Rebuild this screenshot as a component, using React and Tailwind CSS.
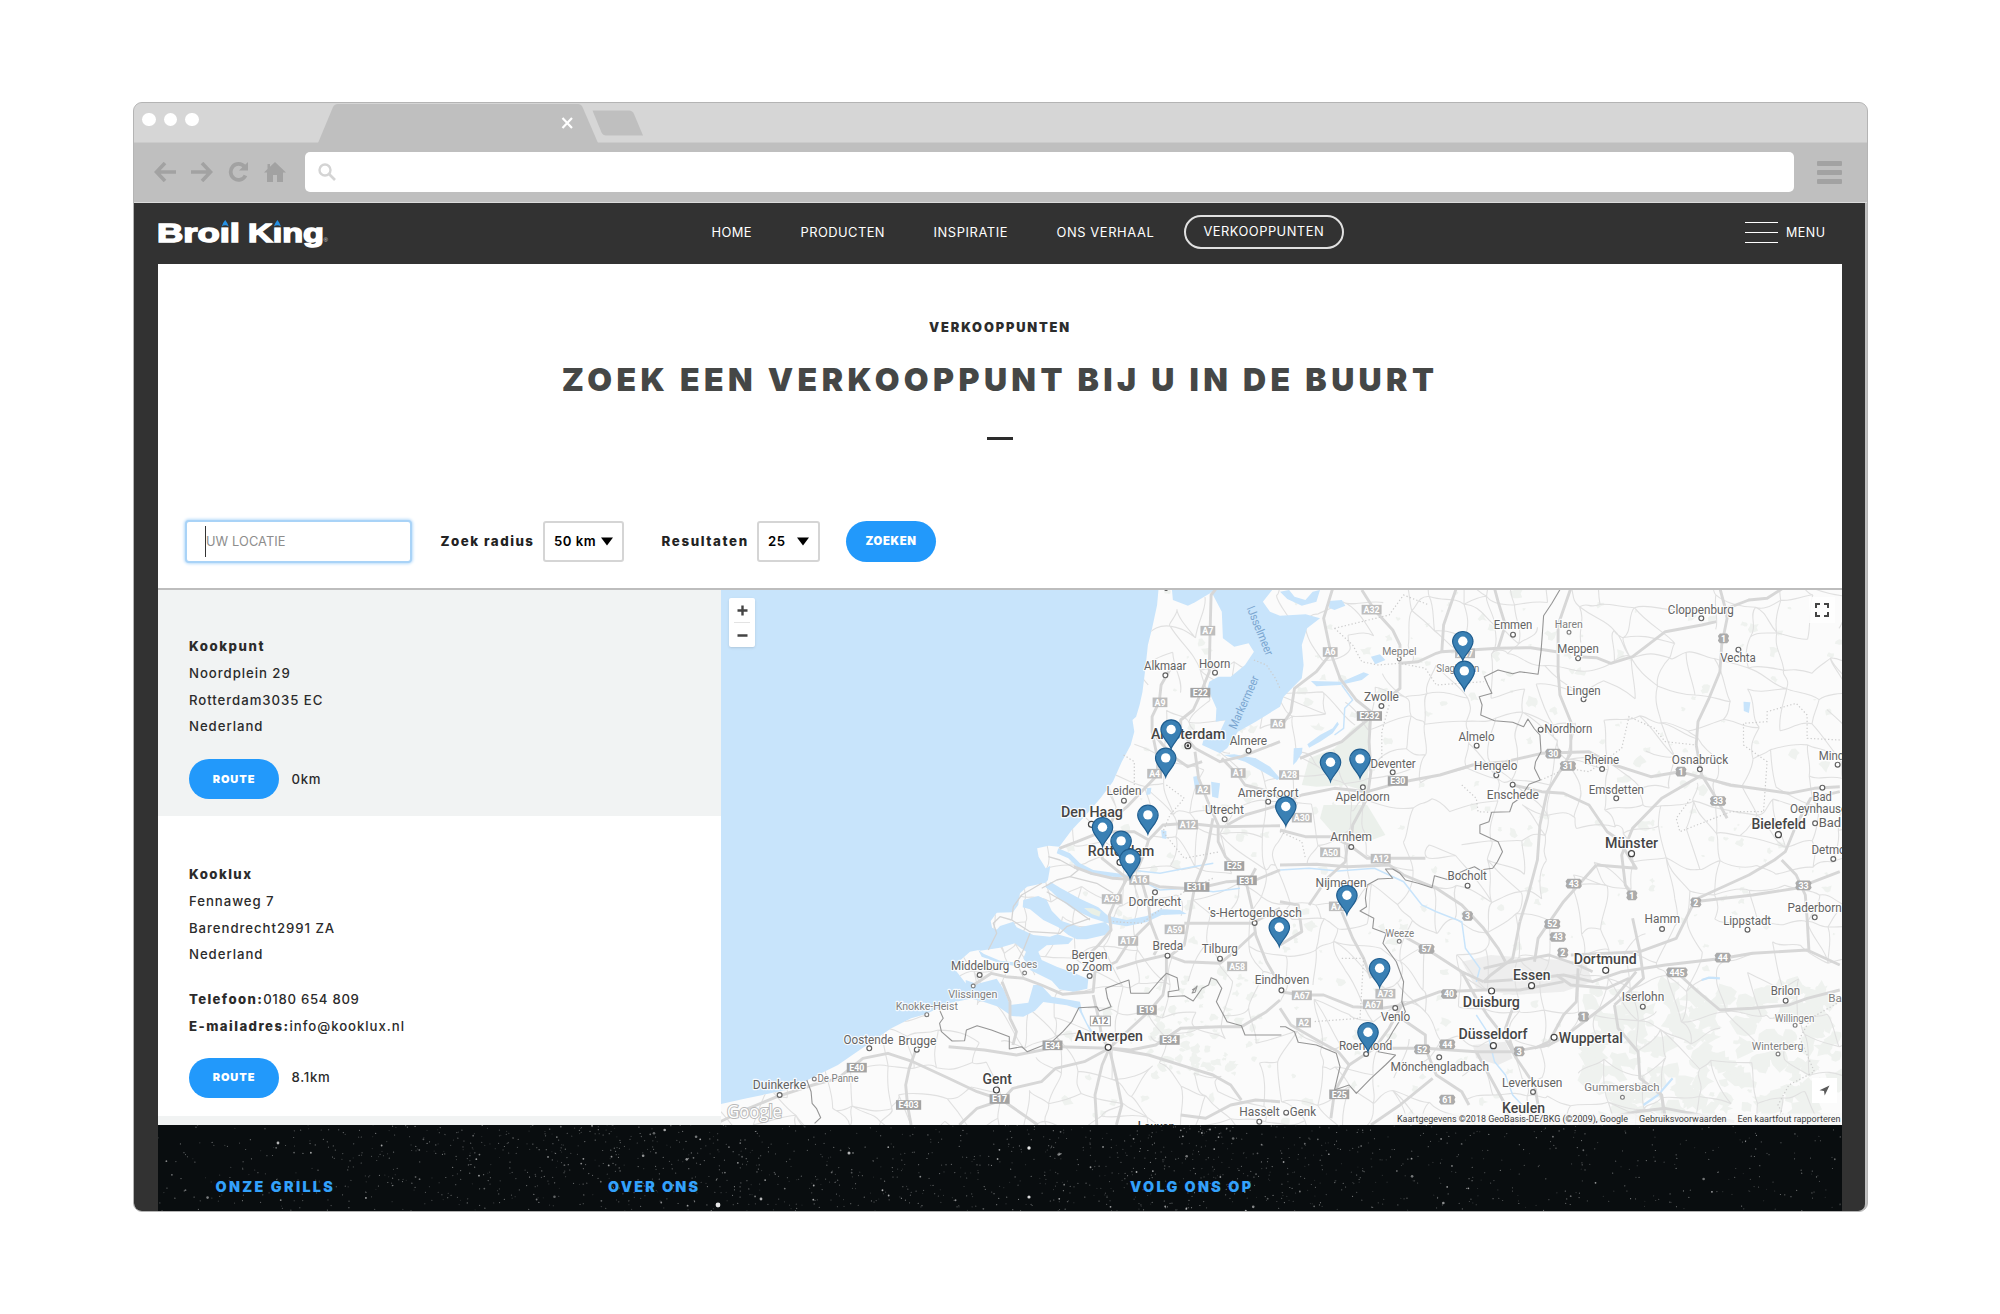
import React from "react";

/* ---------- helpers ---------- */
function rng(seed) {
  let s = seed;
  return () => {
    s = (s * 1664525 + 1013904223) % 4294967296;
    return s / 4294967296;
  };
}

/* Map sheets (west, east, Zeeland inset), each with its own grid unit. */
const SHEETS = {
  W: { x: 720, y: 585, kx: 1 / 2.8, ky: 1 / 3 },
  E: { x: 1280, y: 585, kx: 1 / 2.7509, ky: 1 / 3 },
  Z: { x: 980, y: 820, kx: 1 / 3, ky: 1 / 3 },
};
const px = (s, x) => SHEETS[s].x + x * SHEETS[s].kx;
const py = (s, y) => SHEETS[s].y + y * SHEETS[s].ky;
const line = (s, str) =>
  str
    .split(" ")
    .map((p) => {
      const [x, y] = p.split(",").map(Number);
      return px(s, x).toFixed(1) + "," + py(s, y).toFixed(1);
    })
    .join(" ");

const LAND =
  "1228,10 1224,60 1210,130 1198,180 1190,260 1183,320 1175,360 1165,395 1155,405 1160,440 1150,480 1125,530 1100,590 1065,640 1020,695 985,735 950,785 920,782 888,790 892,815 912,850 925,842 918,885 912,893 860,905 840,925 835,960 820,982 775,983 758,1008 762,1028 778,1035 765,1090 735,1093 700,1100 652,1145 688,1195 725,1205 715,1238 640,1255 575,1288 535,1300 480,1330 400,1388 330,1440 245,1485 185,1515 75,1540 0,1558 0,1640 3200,1640 3200,0";

const WATER = {
  W: [
    "1265,10 1268,45 1310,62 1330,52 1372,25 1390,10",
    "1378,25 1405,80 1408,160 1440,185 1480,175 1495,200 1470,240 1430,275 1395,275 1370,290 1365,310 1390,370 1388,410 1415,405 1400,440 1360,440 1350,480 1400,505 1420,490 1450,440 1500,410 1568,365 1578,335 1629,280 1634,240 1629,180 1644,130 1680,100 1640,88 1568,92 1540,80 1520,50 1550,10 1385,10",
    "1410,510 1440,508 1500,520 1540,545 1568,580 1560,585 1520,560 1470,530",
    "1325,575 1340,572 1342,610 1330,612",
    "1375,590 1400,595 1395,640 1378,635",
    "1195,610 1208,608 1205,628 1194,630",
    "1235,735 1250,738 1250,762 1238,760",
  ],
  Z: [
    "235,85 270,100 300,130 340,150 400,158 450,165 450,172 390,170 335,165 295,145 265,115 230,100",
    "195,200 212,186 240,203 300,236 355,262 385,288 440,300 500,288 540,268 600,270 620,282 545,285 500,306 440,319 385,310 335,294 280,268 235,235 215,215",
    "130,240 175,228 200,240 215,272 245,303 300,322 375,306 394,325 375,345 320,358 290,358 265,345 235,322 190,300 150,268 128,262",
    "-5,385 25,380 45,335 60,318 100,305 110,322 160,345 210,350 232,343 280,356 265,372 200,376 175,395 185,420 230,440 290,462 325,478 322,506 280,515 238,508 215,482 150,450 130,415 138,395 105,370 60,383 0,392",
    "-5,390 12,402 60,422 130,430 145,442 130,442 60,430 5,410",
    "-43,480 -10,492 50,476 72,510 90,555 145,548 160,495 182,494 215,530 300,545 306,575 322,610 342,640 334,642 295,566 260,556 190,546 165,572 130,590 95,588 55,560 10,545 -43,532",
  ],
  E: [
    "0,20 25,15 40,35 70,45 90,20 110,15 100,50 60,62 20,42",
    "135,48 170,45 180,62 150,75 135,68",
    "85,288 170,290 230,262 245,268 225,285 165,300 100,304",
    "75,478 110,450 145,430 158,410 162,418 145,445 110,470 80,488",
    "38,490 62,488 60,505 45,530 36,540",
    "250,215 275,208 290,225 262,238",
    "1275,350 1294,352 1290,384 1276,378",
  ],
};

const MAJOR = {
  W: [
    "1390,10 1375,30 1372,150 1370,260 1340,340 1325,375 1290,405 1290,440 1330,490 1400,530 1460,515 1568,470",
    "1262,250 1235,300 1230,350 1210,395 1210,440 1240,480 1275,520 1310,545 1350,530",
    "1210,440 1225,520 1225,570 1180,620 1140,665 1100,700 1075,760 1070,820 1140,880",
    "1330,500 1340,580 1370,660 1395,720 1395,770 1415,815 1440,840",
    "1405,520 1450,570 1470,600 1540,620 1568,640",
    "950,790 1000,770 1070,740 1160,740 1200,765 1240,720 1310,715 1400,725 1568,722",
    "1420,720 1470,690 1568,660",
    "1200,765 1190,800 1170,850 1140,880 1110,940 1090,990 1095,1035 1060,1080 1040,1100",
    "990,845 1040,865 1100,880 1180,885 1230,905 1330,912 1420,890 1500,885 1568,855",
    "1380,700 1360,820 1330,900 1320,960 1300,1080 1250,1120 1250,1170",
    "1180,885 1200,960 1205,1010 1230,1080 1215,1110",
    "1205,1010 1140,1080 1110,1130 1050,1160 1045,1220 960,1228 900,1200 850,1180 800,1175 760,1165 710,1200",
    "1500,850 1475,900 1490,970 1500,1050 1530,1130 1568,1200",
    "1300,1015 1400,1015 1490,1015 1568,970",
    "1110,1150 1170,1130 1250,1110 1300,1130 1400,1135 1440,1100 1500,1040",
    "1250,1170 1240,1230 1200,1280 1150,1330 1090,1390",
    "1045,1230 1060,1300 1070,1360 1090,1390 1070,1440 1050,1530 1055,1620",
    "1090,1390 1110,1480 1125,1560 1110,1620",
    "1090,1390 1150,1395 1220,1380 1290,1330 1400,1325 1460,1325 1530,1280 1568,1245",
    "1090,1390 1200,1410 1320,1450 1380,1470 1430,1500 1460,1545",
    "1090,1390 1020,1430 940,1450 900,1490 820,1510 790,1545 720,1570 670,1620",
    "1090,1390 950,1385 830,1410 740,1395 640,1385",
    "0,1610 80,1570 160,1535 260,1500 330,1480 400,1420 470,1405 540,1430 640,1480 720,1520 790,1545 850,1590 890,1620",
    "550,1390 530,1450 520,1500 525,1560 535,1620",
    "790,1190 812,1250 812,1300 830,1340 820,1380",
    "1290,1590 1360,1600 1430,1560 1500,1545 1568,1550",
  ],
  E: [
    "145,10 120,100 140,205 100,260 40,310 30,380 0,430",
    "225,15 260,75 310,135 330,180 330,310 285,350",
    "140,205 165,280 210,345 250,380 245,470 250,560 240,640 200,720 195,770",
    "485,10 450,120 445,200 600,190 690,188 760,200",
    "330,235 380,230 430,205 445,200",
    "800,10 765,120 765,260 770,330 800,410 800,505",
    "600,190 620,120 600,50 590,10",
    "820,215 870,218 910,235 970,215 1060,140 1160,120 1200,110",
    "1210,10 1225,70 1230,100 1215,180 1210,260 1180,340 1150,410 1145,480",
    "1230,70 1290,45 1340,40 1380,12",
    "0,660 60,630 150,610 240,620 340,590 440,570 530,540 620,530 720,505 850,500 920,540 1020,575 1100,560 1170,580 1240,600 1400,625 1470,610 1540,605",
    "800,505 775,550 735,620 715,720 708,825 680,940 660,1010",
    "1145,480 1160,570 1050,640 970,730 940,810 950,900 970,935",
    "1160,570 1200,640 1230,700",
    "640,600 720,620 780,625 850,660 900,740 940,770",
    "0,735 70,755 140,755 190,780 240,820 300,820 400,820",
    "55,520 100,500 170,470 245,400",
    "0,840 100,838 185,845 300,840 340,870 430,910 500,960 560,1030 600,1090 620,1130",
    "185,780 180,830 130,880 80,960",
    "170,980 200,1060 230,1120 250,1180",
    "970,1000 990,1100 1000,1180 960,1220 920,1260",
    "1540,860 1420,910 1300,930 1140,950 1090,1060 990,1100 800,1110",
    "660,1010 640,1120 580,1170 560,1190",
    "560,1190 500,1160 400,1090 350,1060 330,1040",
    "500,1160 540,1240 570,1290 620,1360 650,1420",
    "560,1150 640,1130 740,1110 820,1140 860,1160",
    "560,1190 700,1180 780,1170 860,1190 940,1160 1060,1140 1220,1120 1300,1105 1450,1095 1540,1140",
    "0,1220 60,1230 120,1230 200,1265 280,1270 340,1260 440,1220 560,1215 660,1215 780,1190",
    "820,1150 815,1250 780,1290 740,1370 700,1390",
    "980,1160 920,1240 860,1290 800,1340 740,1380 640,1400 540,1400 400,1390 300,1390",
    "760,1170 800,1200 900,1210 960,1180",
    "1090,1160 1150,1220 1210,1275 1300,1270 1400,1260 1450,1240 1540,1215",
    "920,1260 930,1330 985,1400 990,1480 1050,1530 1060,1600",
    "320,1290 400,1350 400,1390 430,1470 500,1520 520,1560",
    "640,1270 620,1330 650,1420 700,1500 720,1620",
    "540,1400 580,1480 620,1560 640,1620",
    "250,1620 330,1560 420,1480",
    "0,1270 30,1320 110,1370 160,1400 190,1440 150,1520 140,1600",
    "340,1250 300,1330 260,1390 190,1440",
    "0,1080 60,1040 50,960 0,950",
    "1380,825 1420,870 1445,930 1450,1000 1455,1095",
    "1540,620 1460,640 1420,720 1390,800 1360,825 1290,870 1150,940",
    "870,840 980,850 940,780",
    "700,1130 710,1060 780,950 870,840",
    "820,1620 980,1580 1060,1570 1250,1610",
  ],
};

const MINOR_Z = [
  "185,205 230,180 270,170 295,150 240,120 205,110",
  "95,300 100,260 125,225 185,190",
  "95,300 60,290 40,310 50,340 25,390",
  "95,300 150,335 240,340 260,320 330,295",
  "150,340 130,390 110,430 130,470",
  "200,215 260,250 330,300",
  "270,170 350,190 400,220",
];

const BORDERS = {
  W: [
    "1572,1350 1520,1350 1470,1350 1460,1322 1420,1310 1390,1250 1405,1210 1390,1185 1375,1178 1368,1200 1350,1210 1325,1248 1300,1232 1255,1235 1255,1220 1285,1215 1280,1178 1250,1165 1232,1185 1220,1200 1200,1225 1150,1225 1145,1185 1080,1210 1085,1240 1095,1265 1062,1278 1055,1265 1005,1268 985,1310 960,1340 930,1370 860,1400 845,1385 810,1392 810,1355 760,1335 720,1322 690,1335 685,1367 650,1368 620,1340 615,1315 625,1300 615,1275",
    "243,1485 255,1520 258,1555 270,1570 282,1598 265,1615",
    "1322,1215 1332,1208 1336,1203 1330,1222 1322,1224 1330,1210",
  ],
  E: [
    "770,14 748,55 725,92 722,140 718,200 710,268 660,260 640,266 600,255 562,275 572,300 583,325 548,335 556,360 552,390 590,407 640,412 670,425 682,402 700,432 715,450 718,500 703,530 700,550 716,585 685,598 660,640 640,655 632,680 582,682 575,710 550,720 550,745 600,770 612,800 598,830 585,850 550,855 535,845 510,855 480,870 465,885 425,872 418,908 380,895 345,885 330,865 310,852 290,852 310,880 270,882 240,900 235,940 238,965 220,978 258,1000 255,1030 292,1045 283,1075 320,1130 340,1190 335,1250 345,1280 310,1340 300,1360 270,1400 318,1410 290,1440 250,1480 210,1525 190,1500 150,1515 165,1445 155,1405 100,1380 50,1372 40,1340 15,1325 0,1325",
  ],
};
const DOTTED = {
  W: [
    "1495,225 1530,240 1555,280 1568,310",
    "1250,600 1300,640 1260,690 1240,740 1300,820 1400,800",
    "1130,510 1160,530 1160,600",
    "1100,1010 1180,1015 1300,920 1380,880",
  ],
  E: [
    "150,130 200,180 225,230 270,240 330,235 400,250 430,300 560,290",
    "150,130 300,90 340,30 410,60",
    "300,360 280,440 280,520",
    "718,585 790,550 850,560 940,490 960,395 1030,430 1060,470 1145,480",
    "1540,465 1450,460 1450,390 1420,355 1340,380 1340,410 1275,415 1275,480 1340,530 1330,680 1240,680 1100,740 1090,700 1130,640",
    "0,740 60,770 70,820",
    "170,1120 230,1120 220,1300 90,1310",
    "1540,1250 1460,1300 1430,1360 1470,1460 1400,1500 1370,1560 1395,1610",
    "500,600 540,640 545,680 580,682",
  ],
};

/* [sheet, label, x1, x2, baseline, tier, dotX, dotY] */
const CITIES = [
  ["W", "Alkmaar", 1187, 1306, 254, "m", 1247, 271],
  ["W", "Hoorn", 1341, 1429, 248, "m", 1386, 263],
  ["W", "Amsterdam", 1207, 1415, 461, "l", 1310, 482],
  ["W", "Almere", 1427, 1532, 480, "m", 1480, 497],
  ["W", "Leiden", 1082, 1180, 631, "m", 1131, 647],
  ["W", "Den Haag", 955, 1128, 697, "l", 1040, 718],
  ["W", "Utrecht", 1358, 1467, 687, "m", 1413, 703],
  ["W", "Amersfoort", 1450, 1620, 636, "m", 1535, 650],
  ["W", "Rotterdam", 1030, 1216, 814, "l", 1120, 832],
  ["W", "Dordrecht", 1144, 1291, 963, "m", 1218, 922],
  ["W", "'s-Hertogenbosch", 1367, 1629, 997, "m", 1497, 1014],
  ["W", "Breda", 1211, 1297, 1096, "m", 1253, 1112],
  ["W", "Tilburg", 1349, 1450, 1104, "m", 1400, 1121],
  ["W", "Bergen", 984, 1085, 1122, "m"],
  ["W", "op Zoom", 969, 1098, 1157, "m", 1035, 1173],
  ["W", "Middelburg", 647, 810, 1154, "m", 727, 1170],
  ["W", "Goes", 822, 889, 1150, "s", 853, 1164],
  ["W", "Vlissingen", 639, 777, 1239, "s", 709, 1203],
  ["W", "Knokke-Heist", 492, 666, 1275, "s", 579, 1289],
  ["W", "Eindhoven", 1497, 1650, 1198, "m", 1572, 1216],
  ["W", "Oostende", 346, 486, 1376, "m", 418, 1390],
  ["W", "Brugge", 499, 606, 1380, "m", 551, 1394],
  ["W", "Antwerpen", 993, 1184, 1368, "l", 1087, 1387],
  ["W", "De Panne", 273, 388, 1491, "s", 264, 1482],
  ["W", "Gent", 735, 817, 1496, "l", 774, 1515],
  ["W", "Duinkerke", 92, 241, 1513, "m", 167, 1530],
  ["W", "Hasselt", 1454, 1567, 1594, "m", 1510, 1610],
  ["W", "Leuven", 1170, 1274, 1641, "l"],
  ["E", "Meppel", 281, 376, 209, "s", 328, 222],
  ["E", "Emmen", 588, 694, 132, "m", 641, 149],
  ["E", "Haren", 756, 833, 128, "s", 795, 142],
  ["E", "Meppen", 763, 877, 204, "m", 820, 220],
  ["E", "Slagharen", 430, 548, 261, "s"],
  ["E", "Cloppenburg", 1067, 1248, 87, "m", 1159, 100],
  ["E", "Vechta", 1211, 1309, 231, "m", 1261, 194],
  ["E", "Zwolle", 231, 327, 347, "m", 279, 363],
  ["E", "Lingen", 788, 882, 330, "m", 835, 343],
  ["E", "Nordhorn", 727, 859, 445, "m", 717, 434],
  ["E", "Almelo", 491, 590, 469, "m", 541, 482],
  ["E", "Deventer", 249, 373, 549, "m", 310, 562],
  ["E", "Hengelo", 534, 653, 555, "m", 595, 571],
  ["E", "Enschede", 569, 712, 641, "m", 640, 599],
  ["E", "Apeldoorn", 153, 302, 649, "m", 228, 607],
  ["E", "Rheine", 837, 933, 536, "m", 886, 552],
  ["E", "Osnabrück", 1078, 1233, 536, "m", 1155, 553],
  ["E", "Emsdetten", 849, 1001, 627, "m", 925, 640],
  ["E", "Minden", 1482, 1586, 525, "m", 1534, 539],
  ["E", "Bad", 1465, 1518, 649, "m", 1492, 608],
  ["E", "Oeynhausen", 1403, 1578, 683, "m"],
  ["E", "Bad Salzuflen", 1482, 1698, 726, "m", 1472, 715],
  ["E", "Bielefeld", 1297, 1447, 731, "l", 1371, 749],
  ["E", "Detmold", 1462, 1582, 808, "m", 1522, 822],
  ["E", "Münster", 894, 1040, 788, "l", 967, 806],
  ["E", "Arnhem", 138, 253, 769, "m", 196, 786],
  ["E", "Nijmegen", 98, 238, 905, "m"],
  ["E", "Bocholt", 461, 569, 886, "m", 516, 902],
  ["E", "Weeze", 290, 369, 1055, "s", 328, 1069],
  ["E", "Hamm", 1003, 1101, 1015, "m", 1051, 1032],
  ["E", "Lippstadt", 1219, 1351, 1021, "m", 1286, 1034],
  ["E", "Paderborn", 1396, 1545, 981, "m", 1471, 997],
  ["E", "Dortmund", 808, 981, 1138, "l", 896, 1156],
  ["E", "Essen", 641, 744, 1184, "l", 692, 1202],
  ["E", "Duisburg", 503, 660, 1267, "l", 582, 1218],
  ["E", "Iserlohn", 940, 1057, 1248, "m", 998, 1265],
  ["E", "Brilon", 1350, 1431, 1231, "m", 1391, 1247],
  ["E", "Bad Arolsen", 1508, 1680, 1250, "s"],
  ["E", "Willingen", 1361, 1470, 1310, "s", 1417, 1321],
  ["E", "Winterberg", 1298, 1440, 1394, "s", 1370, 1407],
  ["E", "Venlo", 277, 358, 1309, "m", 317, 1269],
  ["E", "Düsseldorf", 491, 681, 1362, "l", 587, 1382],
  ["E", "Wuppertal", 767, 943, 1374, "l", 754, 1357],
  ["E", "Roermond", 162, 309, 1394, "m", 237, 1407],
  ["E", "Mönchengladbach", 304, 575, 1459, "m", 438, 1417],
  ["E", "Leverkusen", 611, 777, 1505, "m", 696, 1521],
  ["E", "Gummersbach", 837, 1044, 1519, "s", 942, 1537],
  ["E", "Keulen", 611, 729, 1583, "l"],
  ["E", "Genk", 27, 99, 1594, "m", 17, 1583],
];
const TIER = {
  l: { size: 14, fill: "#454545", weight: 500, r: 3 },
  m: { size: 12.5, fill: "#636363", weight: 400, r: 2.4 },
  s: { size: 11.6, fill: "#808080", weight: 400, r: 1.9 },
};

/* [sheet, text, centreX, centreY, kind] */
const SHIELDS = [
  ["W", "A7", 1366, 137, "a"], ["W", "A9", 1232, 352, "a"], ["W", "E22", 1345, 323, "e"],
  ["W", "A4", 1217, 566, "a"], ["W", "A1", 1451, 564, "a"], ["W", "A2", 1352, 614, "a"],
  ["W", "A12", 1310, 719, "a"], ["W", "A6", 1562, 416, "a"], ["W", "A16", 1174, 885, "a"],
  ["W", "A29", 1097, 942, "a"], ["W", "E311", 1335, 906, "e"], ["W", "E31", 1475, 886, "e"],
  ["W", "E25", 1440, 843, "e"], ["W", "A59", 1273, 1033, "a"], ["W", "A17", 1143, 1068, "a"],
  ["W", "A58", 1448, 1144, "a"], ["W", "E19", 1195, 1275, "e"], ["W", "A12", 1065, 1308, "o"],
  ["W", "E34", 931, 1381, "e"], ["W", "E34", 1259, 1365, "e"], ["W", "E40", 383, 1448, "e"],
  ["W", "E403", 528, 1560, "e"], ["W", "E17", 783, 1542, "e"],
  ["E", "A32", 252, 74, "a"], ["E", "A6", 138, 201, "a"], ["E", "A37", 509, 205, "a"],
  ["E", "E232", 246, 393, "e"], ["E", "A28", 25, 570, "a"], ["E", "E30", 324, 588, "e"],
  ["E", "A30", 60, 698, "a"], ["E", "A50", 138, 802, "a"], ["E", "A12", 277, 821, "a"],
  ["E", "30", 752, 506, "b"], ["E", "31", 792, 543, "b"], ["E", "1", 1220, 160, "b"],
  ["E", "1", 1103, 560, "b"], ["E", "33", 1205, 648, "b"], ["E", "43", 808, 896, "b"],
  ["E", "1", 968, 931, "b"], ["E", "2", 1144, 952, "b"], ["E", "33", 1440, 901, "b"],
  ["E", "3", 516, 993, "b"], ["E", "52", 749, 1017, "b"], ["E", "43", 764, 1056, "b"],
  ["E", "2", 778, 1103, "b"], ["E", "57", 403, 1092, "b"], ["E", "44", 1218, 1118, "b"],
  ["E", "445", 1092, 1162, "b"], ["E", "40", 465, 1227, "b"], ["E", "A73", 290, 1226, "a"],
  ["E", "A67", 60, 1231, "a"], ["E", "A67", 256, 1258, "a"], ["E", "A2", 65, 1313, "a"],
  ["E", "A73", 162, 964, "a"], ["E", "1", 835, 1295, "b"], ["E", "44", 460, 1378, "b"],
  ["E", "52", 391, 1393, "b"], ["E", "3", 658, 1399, "b"], ["E", "61", 460, 1544, "b"],
  ["E", "E25", 163, 1528, "e"],
];

const PINS = [
  ["W", 1263, 490], ["W", 1248, 575], ["W", 1198, 746], ["W", 1071, 783], ["W", 1123, 824], ["W", 1148, 878],
  ["E", 503, 225], ["E", 507, 314], ["E", 139, 588], ["E", 220, 578], ["E", 16, 721],
  ["E", -2, 1083], ["E", 184, 987], ["E", 274, 1206], ["E", 242, 1398],
];

/* Fine web of local roads and wooded patches. */
const web = (() => {
  const r = rng(11);
  const step = 29;
  const cols = Math.ceil(1121 / step) + 2;
  const rows = Math.ceil(534 / step) + 2;
  const n = [];
  for (let j = 0; j < rows; j++) {
    n.push([]);
    for (let i = 0; i < cols; i++) {
      n[j].push([721 + (i - 0.5) * step + (r() - 0.5) * 23, 590 + (j - 0.5) * step + (r() - 0.5) * 23]);
    }
  }
  let d = "";
  const seg = (a, b) => {
    const j = () => (r() - 0.5) * 12;
    const c1 = [a[0] + (b[0] - a[0]) * 0.33 + j(), a[1] + (b[1] - a[1]) * 0.33 + j()];
    const c2 = [a[0] + (b[0] - a[0]) * 0.67 + j(), a[1] + (b[1] - a[1]) * 0.67 + j()];
    d += `M${a[0].toFixed(1)} ${a[1].toFixed(1)}C${c1[0].toFixed(1)} ${c1[1].toFixed(1)} ${c2[0].toFixed(1)} ${c2[1].toFixed(1)} ${b[0].toFixed(1)} ${b[1].toFixed(1)}`;
  };
  for (let j = 0; j < rows - 1; j++)
    for (let i = 0; i < cols - 1; i++) {
      if (r() < 0.66) seg(n[j][i], n[j][i + 1]);
      if (r() < 0.66) seg(n[j][i], n[j + 1][i]);
      if (r() < 0.15) seg(n[j][i], n[j + 1][i + 1]);
    }
  return d;
})();

const woods = (() => {
  const r = rng(5);
  const out = [];
  const blob = (cx, cy, s) => {
    const k = 9;
    let p = "";
    for (let i = 0; i < k; i++) {
      const a = (i / k) * Math.PI * 2;
      const q = s * (0.4 + r() * 0.9);
      p += `${(cx + Math.cos(a) * q * 1.2).toFixed(1)},${(cy + Math.sin(a) * q).toFixed(1)} `;
    }
    out.push(p);
  };
  for (let i = 0; i < 330; i++) blob(1060 + r() * 780, 592 + r() * 530, 1 + r() * 4.5);
  for (let i = 0; i < 200; i++) blob(1590 + r() * 250, 985 + r() * 138, 3 + r() * 9);
  for (let i = 0; i < 80; i++) blob(1130 + r() * 130, 975 + r() * 100, 1 + r() * 4);
  return out;
})();

const stars = (() => {
  const r = rng(77);
  const out = [];
  for (let i = 0; i < 1700; i++) {
    let x = r() * 1684;
    const y = r() * 86;
    if (i % 3 === 0) x = 380 + y * 2.6 + (r() + r() + r() - 1.5) * 330;
    if (i % 5 === 0) x = 1040 + (r() + r() - 1) * 320;
    const big = r();
    out.push([x, y, big > 0.992 ? 1.3 : big > 0.93 ? 0.9 : 0.6, 0.12 + r() * 0.36 + (big > 0.93 ? 0.18 : 0)]);
  }
  out.push([560, 80, 2.4, 0.9], [871, 23, 1.7, 0.9], [871, 72, 1.6, 0.85], [120, 18, 1.4, 0.7], [691, 28, 1.5, 0.7], [603, 74, 1.4, 0.7]);
  return out;
})();

/* ---------- map ---------- */
function Shield({ s, t, x, y, k }) {
  const cx = px(s, x);
  const cy = py(s, y);
  const w = t.length * 5.2 + (k === "b" ? 6 : 4.4);
  const h = 9.6;
  const fill = k === "e" ? "#a3a3a3" : k === "b" ? "#ababab" : k === "o" ? "#fff" : "#bdbdbd";
  const l = cx - w / 2;
  const rr = cx + w / 2;
  const tp = cy - h / 2;
  const bt = cy + h / 2;
  return (
    <g>
      {k === "b" ? (
        <path d={`M${l + 2} ${tp}H${rr - 2}L${rr} ${tp + 2.5}L${rr - 1} ${cy}L${rr} ${bt - 2.5}L${rr - 2} ${bt}H${l + 2}L${l} ${bt - 2.5}L${l + 1} ${cy}L${l} ${tp + 2.5}Z`} fill={fill} />
      ) : (
        <rect x={l} y={tp} width={w} height={h} fill={fill} stroke={k === "o" ? "#a8a8a8" : "none"} />
      )}
      <text x={cx} y={cy + 3.2} textAnchor="middle" fontSize="8.8" fontWeight="700" fill={k === "o" ? "#8c8c8c" : "#fff"}>
        {t}
      </text>
    </g>
  );
}

function Lines({ set }) {
  return Object.keys(set).flatMap((s) => set[s].map((p, i) => <polyline key={s + i} points={line(s, p)} />));
}

function MapDrawing() {
  return (
    <svg className="block" width="1121" height="535" viewBox="721 590 1121 535" fontFamily="Roboto, sans-serif">
      <defs>
        <clipPath id="land">
          <polygon points={line("W", LAND)} />
        </clipPath>
      </defs>
      <rect x="721" y="590" width="1121" height="535" fill="#c8e4fb" />
      <g clipPath="url(#land)">
        <rect x="721" y="590" width="1121" height="535" fill="#fbfbfb" />
        {woods.map((p, i) => (
          <polygon key={i} points={p} fill="#eff2ef" />
        ))}
        <polygon points={line("E", "200,430 245,400 245,480 240,620 180,600 100,605 60,600 80,520 150,490")} fill="#ebf0eb" />
        <polygon points={line("E", "120,660 240,660 290,750 240,770 150,750 110,700")} fill="#ebf0eb" />
        <polygon points={line("E", "500,1130 580,1110 700,1120 840,1130 860,1190 780,1220 640,1230 540,1210")} fill="#eeeeee" />
        <polygon points={line("E", "530,1380 620,1370 640,1420 600,1440 540,1420")} fill="#ececec" />
        <path d={web} fill="none" stroke="#e0e0e0" strokeWidth="1.1" />
      </g>
      {Object.keys(WATER).flatMap((s) =>
        WATER[s].map((p, i) => <polygon key={s + i} points={line(s, p)} fill="#c8e4fb" />)
      )}
      <polygon points={line("Z", "312,264 340,265 362,275 358,290 335,282")} fill="#eaf0e6" />
      <g fill="none" stroke="#c8e4fb" strokeWidth="1.5">
        <polyline points={line("E", "0,855 80,850 160,858 260,850 340,890 390,960 430,980 500,1010 510,1090 550,1150 540,1190")} />
        <polyline points={line("E", "540,1290 570,1340 590,1430 620,1470 640,1530 700,1600")} />
        <polyline points={line("E", "170,300 200,345 178,370 175,430 150,450")} />
        <polyline points={line("E", "1000,1560 1040,1530 1080,1480")} strokeWidth="2.2" />
        <polyline points={line("E", "1160,1185 1180,1178 1210,1180")} strokeWidth="2.2" />
        <polyline points={line("Z", "450,168 500,190 540,210 620,205 700,215 780,205")} />
        <polyline points={line("Z", "450,150 540,160 640,140 700,130")} />
      </g>
      <g fill="none" stroke="#d4d4d4" strokeWidth="1.3" strokeLinejoin="round">
        {MINOR_Z.map((p, i) => (
          <polyline key={i} points={line("Z", p)} />
        ))}
      </g>
      <g clipPath="url(#land)" fill="none" stroke="#d7d7d7" strokeWidth="2.9" strokeLinejoin="round">
        <Lines set={MAJOR} />
      </g>
      <g fill="none" stroke="#cccccc" strokeWidth="1.2" strokeDasharray="1.3 2.2">
        <Lines set={DOTTED} />
      </g>
      <g fill="none" stroke="#959595" strokeWidth="1.1" strokeLinejoin="round">
        <Lines set={BORDERS} />
      </g>
      {SHIELDS.map(([s, t, x, y, k], i) => (
        <Shield key={i} s={s} t={t} x={x} y={y} k={k} />
      ))}
      <g fontSize="12" fill="#7ba6d0">
        <text transform="translate(1246.5 608) rotate(68)" textLength="52" lengthAdjust="spacingAndGlyphs">IJsselmeer</text>
        <text transform="translate(1236 730) rotate(-66)" textLength="57" lengthAdjust="spacingAndGlyphs">Markermeer</text>
      </g>
      {CITIES.map(([s, t, x1, x2, y, tier, dx, dy], i) => {
        const c = TIER[tier];
        return (
          <g key={i}>
            {dx !== undefined && (
              <circle cx={px(s, dx)} cy={py(s, dy)} r={c.r} fill="#fff" stroke={c.fill} strokeWidth="1.2" />
            )}
            <text
              x={px(s, x1)}
              y={py(s, y)}
              textLength={(x2 - x1) * SHEETS[s].kx}
              lengthAdjust="spacingAndGlyphs"
              fontSize={c.size}
              fontWeight={c.weight}
              fill={c.fill}
              stroke="#fff"
              strokeWidth="2.4"
              strokeOpacity="0.85"
              strokeLinejoin="round"
              paintOrder="stroke"
            >
              {t}
            </text>
          </g>
        );
      })}
      <circle cx={px("W", 1310)} cy={py("W", 482)} r="1.3" fill="#333" />
      <circle cx={px("W", 1249)} cy={py("W", 12)} r="2" fill="#555" />
      {PINS.map(([s, x, y], i) => (
        <g key={i} transform={`translate(${px(s, x).toFixed(1)} ${(py(s, y) + 1).toFixed(1)})`}>
          <path d="M0 -0.5C-1.6 -6 -10.2 -12.5 -10.2 -19.5A10.2 10 0 0 1 10.2 -19.5C10.2 -12.5 1.6 -6 0 -0.5Z" fill="#3a80b4" stroke="#1f5d8f" strokeWidth="1.2" />
          <circle cx="0" cy="-19.8" r="4.7" fill="#fff" />
        </g>
      ))}
      <text x="727" y="1118" fontSize="17.5" fontWeight="500" fontFamily="Open Sans, sans-serif" textLength="55" lengthAdjust="spacingAndGlyphs" fill="#fff" stroke="#b9b9b9" strokeWidth="2" paintOrder="stroke">
        Google
      </text>
      <rect x="1393" y="1113.500" width="449" height="11.500" fill="#f8f8f8" fillOpacity="0.75" />
      <g fontSize="9.6" fill="#3c3c3c">
        <text x="1397" y="1121.500" textLength="231" lengthAdjust="spacingAndGlyphs">Kaartgegevens ©2018 GeoBasis-DE/BKG (©2009), Google</text>
        <text x="1639" y="1121.500" textLength="87.5" lengthAdjust="spacingAndGlyphs">Gebruiksvoorwaarden</text>
        <text x="1737.5" y="1121.500" textLength="103" lengthAdjust="spacingAndGlyphs">Een kaartfout rapporteren</text>
      </g>
    </svg>
  );
}

function MapPanel() {
  return (
    <div className="relative h-[535px] w-[1121px] overflow-hidden">
      <MapDrawing />
      <div className="absolute top-[8px] left-[8px] flex h-[49px] w-[26px] flex-col items-center rounded-[2px] bg-white shadow-sm">
        <svg width="26" height="49" stroke="#444" strokeWidth="2.4">
          <path d="M8.500 12.500H18.500M13.500 7.500V17.500M8.500 37.500H18.500" />
          <path d="M5 24.500H21" stroke="#e3e3e3" strokeWidth="1" />
        </svg>
      </div>
      <div className="absolute top-[7px] right-[7px] flex h-[26px] w-[26px] items-center justify-center bg-white/80">
        <svg width="14" height="14" fill="none" stroke="#444" strokeWidth="2">
          <path d="M1 5V1H5M9 1H13V5M13 9V13H9M5 13H1V9" />
        </svg>
      </div>
      <div className="absolute right-[5px] bottom-[22px] flex h-[25px] w-[25px] items-center justify-center bg-white">
        <svg width="11" height="11" viewBox="0 0 11 11">
          <path d="M10.5 0.5L0.5 5.3L5 6L5.7 10.5Z" fill="#5a5a5a" />
        </svg>
      </div>
    </div>
  );
}

/* ---------- page ---------- */
function BrowserChrome() {
  return (
    <>
      <div className="flex h-[40px] border-b border-[#cbcbcb] bg-[#d6d6d6]">
        <div className="flex w-[184px] gap-[8px] pt-[10px] pl-[8px]">
          <span className="h-[13px] w-[13.500px] rounded-full bg-white" />
          <span className="h-[13px] w-[13.500px] rounded-full bg-white" />
          <span className="h-[13px] w-[13.500px] rounded-full bg-white" />
        </div>
        <svg width="330" height="40">
          <path d="M0 40L15 4Q16.500 1 20 1H260Q263 1 264.500 4L280 40Z" fill="#bfbfbf" />
          <path d="M274.500 7.500H311Q314.500 7.500 316 11L325 32.500H288Q285 32.500 283.500 29.500Z" fill="#bfbfbf" />
          <path d="M244.500 15L254 25M254 15L244.500 25" stroke="#fff" strokeWidth="2.200" />
        </svg>
      </div>
      <div className="flex h-[60px] items-start border-b border-[#dcdcdc] bg-[#bfbfbf] pt-[9px] pl-[20px]">
        <div className="flex h-[40px] w-[151px] items-center gap-[15px]">
          <svg width="22" height="20" fill="none" stroke="#a2a2a2" strokeWidth="3.600">
            <path d="M11 1L2.500 10L11 19M3 10H22" />
          </svg>
          <svg width="22" height="20" fill="none" stroke="#a2a2a2" strokeWidth="3.600">
            <path d="M11 1L19.500 10L11 19M0 10H19" />
          </svg>
          <svg width="21" height="20" fill="none" stroke="#a2a2a2" strokeWidth="3.800">
            <path d="M16.500 4.800A7.800 8 0 1 0 17.500 13.500" />
            <path d="M20 0V8.500H11Z" fill="#a2a2a2" stroke="none" />
          </svg>
          <svg width="22" height="20" fill="#a2a2a2">
            <path d="M11 0L22 10.500H19V20H13V13H9V20H3V10.500H0L3.500 7V2H6V4.700Z" />
          </svg>
        </div>
        <div className="flex h-[40px] w-[1489px] items-center rounded-[5px] bg-white pl-[13px]">
          <svg width="19" height="18" fill="none" stroke="#d4d4d4" strokeWidth="2.400">
            <circle cx="7" cy="7" r="5.500" />
            <path d="M11 11L17 17" strokeWidth="2.600" />
          </svg>
        </div>
        <div className="ml-[23px] flex flex-col gap-[4px] pt-[9px]">
          <span className="h-[5px] w-[25px] rounded-[1px] bg-[#a2a2a2]" />
          <span className="h-[5px] w-[25px] rounded-[1px] bg-[#a2a2a2]" />
          <span className="h-[5px] w-[25px] rounded-[1px] bg-[#a2a2a2]" />
        </div>
      </div>
    </>
  );
}

function Logo() {
  return (
    <svg width="172" height="34" viewBox="0 0 172 34" fontFamily="Liberation Sans, Arial, sans-serif">
      <g fontSize="26" fontWeight="700" fill="#fff" stroke="#fff" strokeWidth="1.400">
        <text x="-1" y="25" textLength="83" lengthAdjust="spacingAndGlyphs">Broil</text>
        <text x="90" y="25" textLength="76" lengthAdjust="spacingAndGlyphs">King</text>
      </g>
      <rect x="62.500" y="2" width="10" height="8.200" fill="#323232" />
      <rect x="114.500" y="2" width="10" height="8.200" fill="#323232" />
      <path d="M63.700 9.500Q65 5.500 67.200 3Q69.400 5.500 70.700 9.500Q67.200 6.800 63.700 9.500Z" fill="#2590e4" />
      <path d="M115.900 9.500Q117.200 5.500 119.400 3Q121.600 5.500 122.900 9.500Q119.400 6.800 115.900 9.500Z" fill="#2590e4" />
      <text x="165.500" y="25" fontSize="6" fill="#ddd">®</text>
    </svg>
  );
}

function Header() {
  return (
    <header className="flex h-[61px] font-[Inter,sans-serif] text-[12.900px] leading-[60px] text-white">
      <div className="w-[577.5px] pt-[14px] pl-[24px]">
        <Logo />
      </div>
      <span className="w-[89px] tracking-[0.350px]">HOME</span>
      <span className="w-[133px] tracking-[0.450px]">PRODUCTEN</span>
      <span className="w-[123px] tracking-[0.580px]">INSPIRATIE</span>
      <span className="w-[127px] tracking-[0.600px]">ONS VERHAAL</span>
      <span className="mt-[12px] flex h-[34px] w-[160.5px] items-center justify-center rounded-full border-2 border-white/85 tracking-[0.480px]">VERKOOPPUNTEN</span>
      <div className="mt-[19px] ml-[401px] flex w-[33px] flex-col gap-[9px]">
        <span className="h-px bg-white" />
        <span className="h-px bg-white" />
        <span className="h-px bg-white" />
      </div>
      <span className="ml-[8px] text-[12.500px] leading-[59px] tracking-[0.500px]">MENU</span>
    </header>
  );
}

function Select({ value, width }) {
  return (
    <div className={"flex h-[41px] items-center justify-between rounded-[3px] border-2 border-[#d5d5d5] bg-white pr-[9px] pl-[9px] text-[13.2px] font-semibold text-black " + width}>
      <span className="tracking-[0.500px] whitespace-nowrap">{value}</span>
      <svg width="12" height="9">
        <path d="M0 0.500H12L6 8.500Z" fill="#000" />
      </svg>
    </div>
  );
}

function SearchForm() {
  return (
    <div className="flex h-[67px] items-start pl-[27px] text-[13.300px] font-extrabold text-[#222]">
      <div className="-mt-px flex h-[43px] w-[227px] items-center rounded-[4px] border-[2px] border-[#a9d3f7] bg-white pl-[18px] text-[12.8px] font-normal text-[#8d8d8d] shadow-[0_0_3px_1px_#b9dcfa]">
        <span className="h-[31px] w-px bg-[#333]" />
        <span className="tracking-[0.100px]">UW LOCATIE</span>
      </div>
      <span className="ml-[28.500px] w-[102.500px] leading-[41px] tracking-[1.500px] whitespace-nowrap">Zoek radius</span>
      <Select value="50 km" width="w-[81px]" />
      <span className="ml-[37.500px] w-[95.500px] leading-[41px] tracking-[1.620px] whitespace-nowrap">Resultaten</span>
      <Select value="25" width="w-[63px]" />
      <button className="ml-[26px] flex h-[41px] w-[90px] items-center justify-center rounded-full bg-[#2299fb] text-[11.300px] font-black tracking-[0.600px] text-white">ZOEKEN</button>
    </div>
  );
}

function RouteRow({ distance }) {
  return (
    <div className="flex items-center">
      <button className="flex h-[40px] w-[90px] items-center justify-center rounded-[20px] bg-[#2299fb] text-[11px] font-black tracking-[0.900px] text-white">ROUTE</button>
      <span className="ml-[12.500px] text-[13.200px] tracking-[0.700px]">{distance}</span>
    </div>
  );
}

function Results() {
  return (
    <div className="h-[535px] w-[563px] overflow-hidden text-[13.200px] leading-[26.800px] font-medium tracking-[0.950px] text-[#2b2b2b]">
      <div className="h-[226px] bg-[#f1f3f3] pt-[43px] pl-[31px]">
        <p className="font-extrabold tracking-[1.550px]">Kookpunt</p>
        <p>Noordplein 29</p>
        <p>Rotterdam3035 EC</p>
        <p className="mb-[19px]">Nederland</p>
        <RouteRow distance="0km" />
      </div>
      <div className="h-[300px] bg-white pt-[45px] pl-[31px]">
        <p className="font-extrabold tracking-[1.450px]">Kooklux</p>
        <p>Fennaweg 7</p>
        <p>Barendrecht2991 ZA</p>
        <p className="mb-[18px]">Nederland</p>
        <p><b className="font-extrabold tracking-[1.350px]">Telefoon:</b><span className="tracking-[0.700px]">0180 654 809</span></p>
        <p className="mb-[18px]"><b className="font-extrabold tracking-[1.450px]">E-mailadres:</b>info@kooklux.nl</p>
        <RouteRow distance="8.1km" />
      </div>
      <div className="h-[9px] bg-[#f1f3f3]" />
    </div>
  );
}

function Footer() {
  return (
    <footer className="relative h-[86px] overflow-hidden bg-[#090d0f]">
      <svg className="absolute inset-0" width="1684" height="86" fill="#fff">
        {stars.map(([x, y, r, o], i) => (
          <circle key={i} cx={x} cy={y} r={r} opacity={o} />
        ))}
      </svg>
      <div className="relative flex pt-[50px] pl-[57.500px] text-[14.300px] leading-[24px] font-black text-[#33a1fb]">
        <span className="w-[392.500px] tracking-[2.350px]">ONZE GRILLS</span>
        <span className="w-[522px] tracking-[2.200px]">OVER ONS</span>
        <span className="tracking-[2.300px]">VOLG ONS OP</span>
      </div>
    </footer>
  );
}

export default function App() {
  return (
    <div className="flex h-[1314px] w-[2000px] items-start bg-white pt-[102px] pl-[133px]">
      <div className="h-[1110px] w-[1735px] overflow-hidden rounded-[9px] border border-[#b4b4b4] bg-[#bfbfbf]">
        <BrowserChrome />
        <div className="mr-[2px] h-[1008px] overflow-hidden rounded-b-[7px] bg-[#323232] font-[Inter,sans-serif]">
          <Header />
          <main className="ml-[24px] w-[1684px] bg-white">
            <section className="flex h-[257px] flex-col items-center pt-[54px]">
              <h2 className="text-[12.800px] leading-[20px] font-black tracking-[1.850px] text-[#2c2c2c]">VERKOOPPUNTEN</h2>
              <h1 className="mt-[22px] text-[32px] leading-[40px] font-black tracking-[4.400px] whitespace-nowrap text-[#454746]">ZOEK EEN VERKOOPPUNT BIJ U IN DE BUURT</h1>
              <span className="mt-[37px] h-[3px] w-[26px] bg-[#2c2c2c]" />
            </section>
            <SearchForm />
            <div className="h-[2px] bg-[#bdbdbd]" />
            <div className="flex">
              <Results />
              <MapPanel />
            </div>
            <Footer />
          </main>
        </div>
      </div>
    </div>
  );
}
